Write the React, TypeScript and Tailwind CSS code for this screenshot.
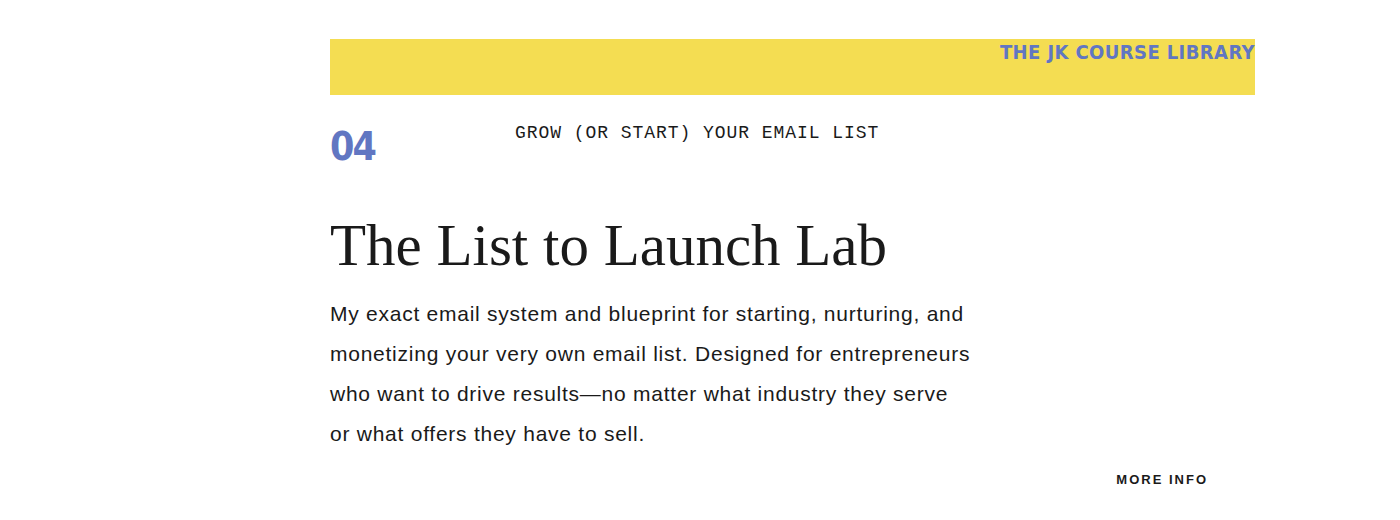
import React from "react";

const Hero = () => {
  return (
    <div className="min-h-[520px] bg-white pt-[39px]">
      <div className="ml-[330px] w-[925px]">
        <div className="h-[56px] bg-[#f4dd52] pt-[1px] text-right">
          <span className="font-['DejaVu_Sans_Condensed','DejaVu_Sans',sans-serif] text-[20px] leading-[24px] font-bold tracking-[0.4px] text-[#6176c2]">
            THE JK COURSE LIBRARY
          </span>
        </div>

        <div className="flex pt-[27px]">
          <div className="w-[185px] pt-[8px] font-['DejaVu_Sans_Condensed','DejaVu_Sans',sans-serif] text-[39px] leading-[34px] font-bold tracking-[-2px] text-[#6176c2]">
            04
          </div>
          <div className="font-['Liberation_Mono',monospace] text-[18px] leading-[22px] tracking-[0.95px] text-[#1a1a1a]">
            GROW (OR START) YOUR EMAIL LIST
          </div>
        </div>

        <h1 className="mt-[49px] font-['Liberation_Serif',serif] text-[59px] leading-[64px] text-[#1a1a1a]">
          The List to Launch Lab
        </h1>

        <p className="mt-[17px] font-['Liberation_Sans',Arial,sans-serif] text-[21px] leading-[40px] tracking-[0.75px] text-[#1a1a1a]">
          My exact email system and blueprint for starting, nurturing, and
          <br />
          monetizing your very own email list. Designed for entrepreneurs
          <br />
          who want to drive results—no matter what industry they serve
          <br />
          or what offers they have to sell.
        </p>

        <div className="mt-[18px] flex justify-end pr-[47px]">
          <a
            href="#"
            className="font-['Liberation_Sans',Arial,sans-serif] text-[13px] leading-[16px] font-bold tracking-[2px] text-[#1a1a1a]"
          >
            MORE INFO
          </a>
        </div>
      </div>
    </div>
  );
};

export default function App() {
  return <Hero />;
}
